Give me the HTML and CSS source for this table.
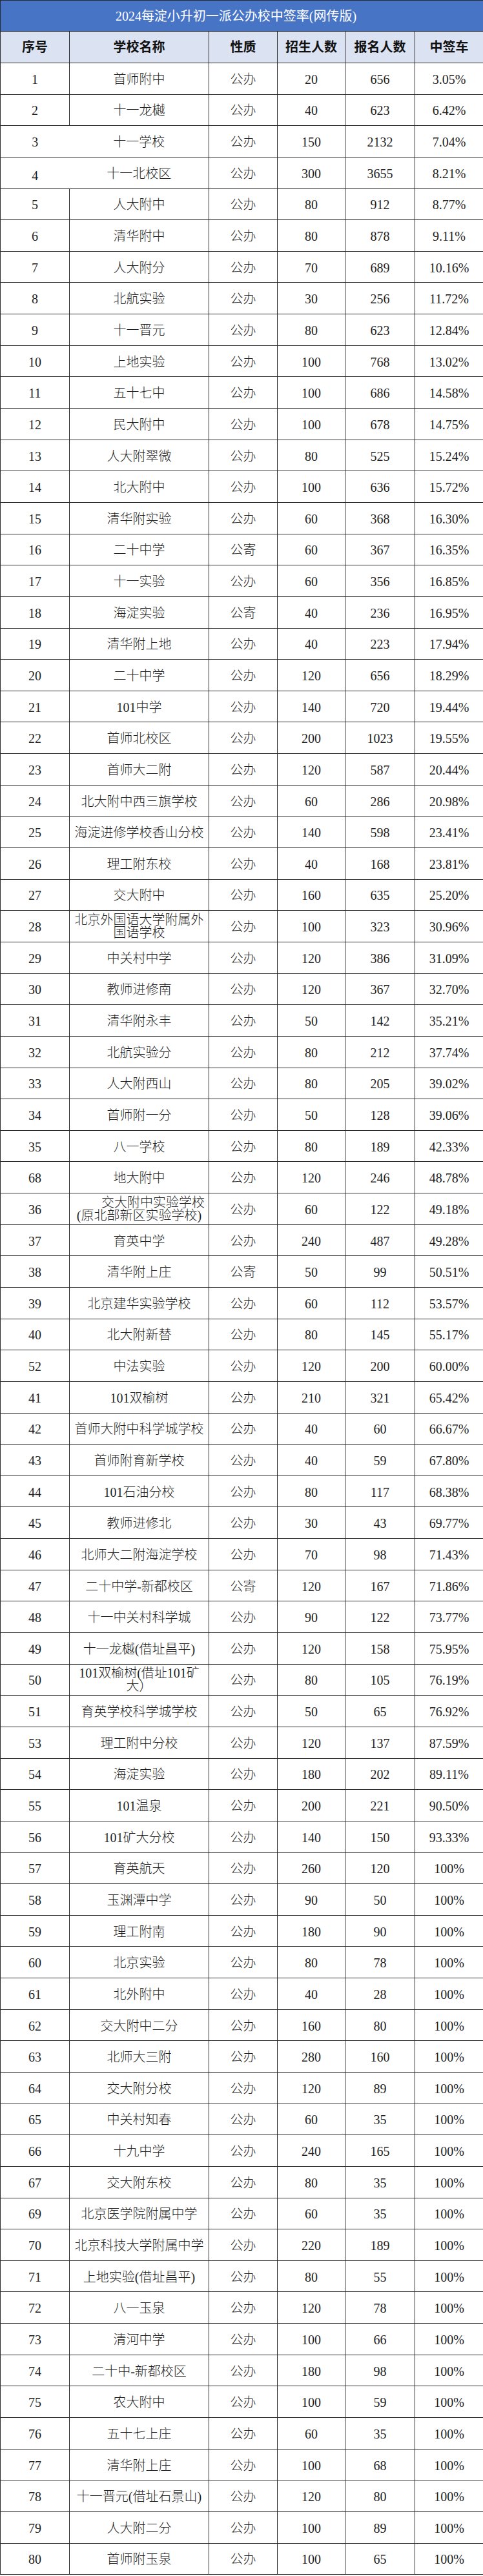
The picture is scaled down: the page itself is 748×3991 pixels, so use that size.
FILE: index.html
```html
<!DOCTYPE html>
<html lang="zh-CN">
<head>
<meta charset="utf-8">
<title>2024每淀小升初一派公办校中签率(网传版)</title>
<link rel="stylesheet" href="styles.css">
</head>
<body>
<table class="sheet">
<colgroup>
<col class="c-no"><col class="c-name"><col class="c-type"><col class="c-quota"><col class="c-apply"><col class="c-rate">
</colgroup>
<thead>
<tr class="title-row"><th colspan="6">2024每淀小升初一派公办校中签率(网传版)</th></tr>
<tr class="head-row"><th>序号</th><th>学校名称</th><th>性质</th><th>招生人数</th><th>报名人数</th><th>中签车</th></tr>
</thead>
<tbody>
<tr><td>1</td><td>首师附中</td><td>公办</td><td>20</td><td>656</td><td>3.05%</td></tr>
<tr><td>2</td><td>十一龙樾</td><td>公办</td><td>40</td><td>623</td><td>6.42%</td></tr>
<tr><td class="open">3</td><td class="open-l">十一学校</td><td>公办</td><td>150</td><td>2132</td><td>7.04%</td></tr>
<tr><td class="open low">4</td><td class="open-l">十一北校区</td><td>公办</td><td>300</td><td>3655</td><td>8.21%</td></tr>
<tr><td>5</td><td>人大附中</td><td>公办</td><td>80</td><td>912</td><td>8.77%</td></tr>
<tr><td>6</td><td>清华附中</td><td>公办</td><td>80</td><td>878</td><td>9.11%</td></tr>
<tr><td>7</td><td>人大附分</td><td>公办</td><td>70</td><td>689</td><td>10.16%</td></tr>
<tr><td>8</td><td>北航实验</td><td>公办</td><td>30</td><td>256</td><td>11.72%</td></tr>
<tr><td>9</td><td>十一晋元</td><td>公办</td><td>80</td><td>623</td><td>12.84%</td></tr>
<tr><td>10</td><td>上地实验</td><td>公办</td><td>100</td><td>768</td><td>13.02%</td></tr>
<tr><td>11</td><td>五十七中</td><td>公办</td><td>100</td><td>686</td><td>14.58%</td></tr>
<tr><td>12</td><td>民大附中</td><td>公办</td><td>100</td><td>678</td><td>14.75%</td></tr>
<tr><td>13</td><td>人大附翠微</td><td>公办</td><td>80</td><td>525</td><td>15.24%</td></tr>
<tr><td>14</td><td>北大附中</td><td>公办</td><td>100</td><td>636</td><td>15.72%</td></tr>
<tr><td>15</td><td>清华附实验</td><td>公办</td><td>60</td><td>368</td><td>16.30%</td></tr>
<tr><td>16</td><td>二十中学</td><td>公寄</td><td>60</td><td>367</td><td>16.35%</td></tr>
<tr><td>17</td><td>十一实验</td><td>公办</td><td>60</td><td>356</td><td>16.85%</td></tr>
<tr><td>18</td><td>海淀实验</td><td>公寄</td><td>40</td><td>236</td><td>16.95%</td></tr>
<tr><td>19</td><td>清华附上地</td><td>公办</td><td>40</td><td>223</td><td>17.94%</td></tr>
<tr><td>20</td><td>二十中学</td><td>公办</td><td>120</td><td>656</td><td>18.29%</td></tr>
<tr><td>21</td><td>101中学</td><td>公办</td><td>140</td><td>720</td><td>19.44%</td></tr>
<tr><td>22</td><td>首师北校区</td><td>公办</td><td>200</td><td>1023</td><td>19.55%</td></tr>
<tr><td>23</td><td>首师大二附</td><td>公办</td><td>120</td><td>587</td><td>20.44%</td></tr>
<tr><td>24</td><td>北大附中西三旗学校</td><td>公办</td><td>60</td><td>286</td><td>20.98%</td></tr>
<tr><td>25</td><td>海淀进修学校香山分校</td><td>公办</td><td>140</td><td>598</td><td>23.41%</td></tr>
<tr><td>26</td><td>理工附东校</td><td>公办</td><td>40</td><td>168</td><td>23.81%</td></tr>
<tr><td>27</td><td>交大附中</td><td>公办</td><td>160</td><td>635</td><td>25.20%</td></tr>
<tr><td>28</td><td class="two">北京外国语大学附属外<br>国语学校</td><td>公办</td><td>100</td><td>323</td><td>30.96%</td></tr>
<tr><td>29</td><td>中关村中学</td><td>公办</td><td>120</td><td>386</td><td>31.09%</td></tr>
<tr><td>30</td><td>教师进修南</td><td>公办</td><td>120</td><td>367</td><td>32.70%</td></tr>
<tr><td>31</td><td>清华附永丰</td><td>公办</td><td>50</td><td>142</td><td>35.21%</td></tr>
<tr><td>32</td><td>北航实验分</td><td>公办</td><td>80</td><td>212</td><td>37.74%</td></tr>
<tr><td>33</td><td>人大附西山</td><td>公办</td><td>80</td><td>205</td><td>39.02%</td></tr>
<tr><td>34</td><td>首师附一分</td><td>公办</td><td>50</td><td>128</td><td>39.06%</td></tr>
<tr><td>35</td><td>八一学校</td><td>公办</td><td>80</td><td>189</td><td>42.33%</td></tr>
<tr><td>68</td><td>地大附中</td><td>公办</td><td>120</td><td>246</td><td>48.78%</td></tr>
<tr><td>36</td><td class="two"><span class="line-r">交大附中实验学校</span><span class="line">(原北部新区实验学校)</span></td><td>公办</td><td>60</td><td>122</td><td>49.18%</td></tr>
<tr><td>37</td><td>育英中学</td><td>公办</td><td>240</td><td>487</td><td>49.28%</td></tr>
<tr><td>38</td><td>清华附上庄</td><td>公寄</td><td>50</td><td>99</td><td>50.51%</td></tr>
<tr><td>39</td><td>北京建华实验学校</td><td>公办</td><td>60</td><td>112</td><td>53.57%</td></tr>
<tr><td>40</td><td>北大附新替</td><td>公办</td><td>80</td><td>145</td><td>55.17%</td></tr>
<tr><td>52</td><td>中法实验</td><td>公办</td><td>120</td><td>200</td><td>60.00%</td></tr>
<tr><td>41</td><td>101双榆树</td><td>公办</td><td>210</td><td>321</td><td>65.42%</td></tr>
<tr><td>42</td><td>首师大附中科学城学校</td><td>公办</td><td>40</td><td>60</td><td>66.67%</td></tr>
<tr><td>43</td><td>首师附育新学校</td><td>公办</td><td>40</td><td>59</td><td>67.80%</td></tr>
<tr><td>44</td><td>101石油分校</td><td>公办</td><td>80</td><td>117</td><td>68.38%</td></tr>
<tr><td>45</td><td>教师进修北</td><td>公办</td><td>30</td><td>43</td><td>69.77%</td></tr>
<tr><td>46</td><td>北师大二附海淀学校</td><td>公办</td><td>70</td><td>98</td><td>71.43%</td></tr>
<tr><td>47</td><td>二十中学-新都校区</td><td>公寄</td><td>120</td><td>167</td><td>71.86%</td></tr>
<tr><td>48</td><td>十一中关村科学城</td><td>公办</td><td>90</td><td>122</td><td>73.77%</td></tr>
<tr><td>49</td><td>十一龙樾(借址昌平)</td><td>公办</td><td>120</td><td>158</td><td>75.95%</td></tr>
<tr><td>50</td><td class="two">101双榆树(借址101矿<br>大）</td><td>公办</td><td>80</td><td>105</td><td>76.19%</td></tr>
<tr><td>51</td><td>育英学校科学城学校</td><td>公办</td><td>50</td><td>65</td><td>76.92%</td></tr>
<tr><td>53</td><td>理工附中分校</td><td>公办</td><td>120</td><td>137</td><td>87.59%</td></tr>
<tr><td>54</td><td>海淀实验</td><td>公办</td><td>180</td><td>202</td><td>89.11%</td></tr>
<tr><td>55</td><td>101温泉</td><td>公办</td><td>200</td><td>221</td><td>90.50%</td></tr>
<tr><td>56</td><td>101矿大分校</td><td>公办</td><td>140</td><td>150</td><td>93.33%</td></tr>
<tr><td>57</td><td>育英航天</td><td>公办</td><td>260</td><td>120</td><td>100%</td></tr>
<tr><td>58</td><td>玉渊潭中学</td><td>公办</td><td>90</td><td>50</td><td>100%</td></tr>
<tr><td>59</td><td>理工附南</td><td>公办</td><td>180</td><td>90</td><td>100%</td></tr>
<tr><td>60</td><td>北京实验</td><td>公办</td><td>80</td><td>78</td><td>100%</td></tr>
<tr><td>61</td><td>北外附中</td><td>公办</td><td>40</td><td>28</td><td>100%</td></tr>
<tr><td>62</td><td>交大附中二分</td><td>公办</td><td>160</td><td>80</td><td>100%</td></tr>
<tr><td>63</td><td>北师大三附</td><td>公办</td><td>280</td><td>160</td><td>100%</td></tr>
<tr><td>64</td><td>交大附分校</td><td>公办</td><td>120</td><td>89</td><td>100%</td></tr>
<tr><td>65</td><td>中关村知春</td><td>公办</td><td>60</td><td>35</td><td>100%</td></tr>
<tr><td>66</td><td>十九中学</td><td>公办</td><td>240</td><td>165</td><td>100%</td></tr>
<tr><td>67</td><td>交大附东校</td><td>公办</td><td>80</td><td>35</td><td>100%</td></tr>
<tr><td>69</td><td>北京医学院附属中学</td><td>公办</td><td>60</td><td>35</td><td>100%</td></tr>
<tr><td>70</td><td>北京科技大学附属中学</td><td>公办</td><td>220</td><td>189</td><td>100%</td></tr>
<tr><td>71</td><td>上地实验(借址昌平)</td><td>公办</td><td>80</td><td>55</td><td>100%</td></tr>
<tr><td>72</td><td>八一玉泉</td><td>公办</td><td>120</td><td>78</td><td>100%</td></tr>
<tr><td>73</td><td>清河中学</td><td>公办</td><td>100</td><td>66</td><td>100%</td></tr>
<tr><td>74</td><td>二十中-新都校区</td><td>公办</td><td>180</td><td>98</td><td>100%</td></tr>
<tr><td>75</td><td>农大附中</td><td>公办</td><td>100</td><td>59</td><td>100%</td></tr>
<tr><td>76</td><td>五十七上庄</td><td>公办</td><td>60</td><td>35</td><td>100%</td></tr>
<tr><td>77</td><td>清华附上庄</td><td>公办</td><td>100</td><td>68</td><td>100%</td></tr>
<tr><td>78</td><td>十一晋元(借址石景山)</td><td>公办</td><td>120</td><td>80</td><td>100%</td></tr>
<tr><td>79</td><td>人大附二分</td><td>公办</td><td>100</td><td>89</td><td>100%</td></tr>
<tr><td>80</td><td>首师附玉泉</td><td>公办</td><td>100</td><td>65</td><td>100%</td></tr>
</tbody>
</table>
</body>
</html>
```
FILE: styles.css
```css
html, body {
  margin: 0;
  padding: 0;
  background: #ffffff;
}

.sheet {
  width: 748px;
  border-collapse: collapse;
  table-layout: fixed;
  font-family: "Liberation Serif", "Noto Sans CJK SC", serif;
  color: #1f1f1f;
}

.c-no { width: 107px; }
.c-name { width: 216px; }
.c-type { width: 106px; }
.c-quota { width: 105px; }
.c-apply { width: 108px; }
.c-rate { width: 106px; }

.sheet th,
.sheet td {
  box-sizing: border-box;
  border: 1px solid #2a2a2a;
  text-align: center;
  vertical-align: middle;
  padding: 0 3px;
  font-size: 20px;
  line-height: 22px;
  white-space: nowrap;
}

.title-row {
  height: 48px;
}

.title-row th {
  background: #4874c6;
  color: #ffffff;
  font-weight: 400;
  font-size: 20px;
  padding: 0 18px 0 0;
}

.head-row {
  height: 49px;
}

.head-row th {
  background: #dbe2f2;
  color: #111111;
  font-weight: 700;
  font-size: 20px;
}

.sheet tbody tr {
  height: 48.65px;
}

.sheet td {
  font-weight: 300;
  padding-top: 2px;
}

.sheet td.open {
  border-right-style: hidden;
}

.sheet td.open-l {
  border-left-style: hidden;
}

.sheet td.low {
  padding-top: 8px;
}

.sheet td.two {
  line-height: 20px;
  white-space: normal;
  padding: 0 6px;
}

.line,
.line-r {
  display: block;
  white-space: nowrap;
}

.line-r {
  text-align: right;
}
```
